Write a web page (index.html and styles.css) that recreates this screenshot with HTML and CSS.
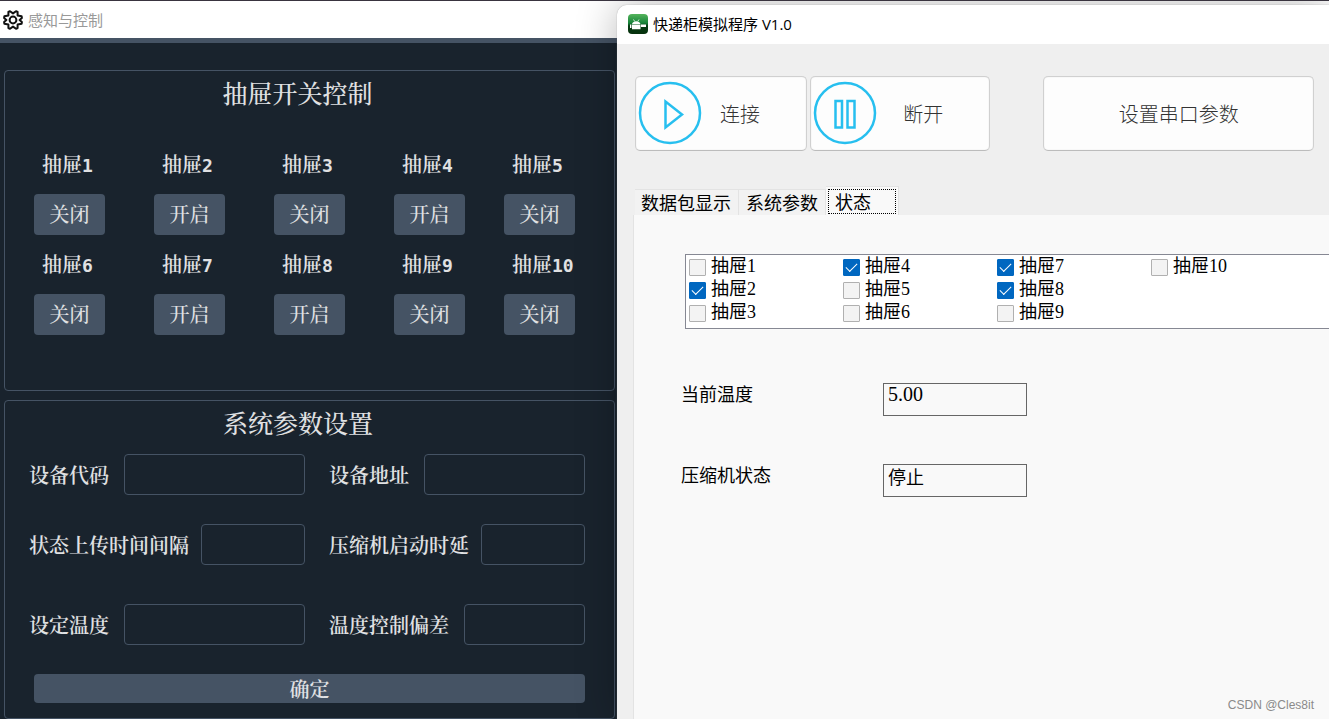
FILE: index.html
```html
<!DOCTYPE html>
<html lang="zh-CN">
<head>
<meta charset="utf-8">
<meta name="viewport" content="width=device-width, initial-scale=1">
<title>感知与控制</title>
<link rel="stylesheet" href="styles.css">
</head>
<body>
<div class="desktop">
  <section class="sense">
    <header class="sense-bar">
      <svg class="gear" viewBox="0 0 20 20" fill="none" stroke="#111" stroke-width="2" stroke-linejoin="round" aria-hidden="true"><path d="M7 1.200 10 3.400 13 1.200 14.600 2 14.600 5.400 18.600 6.200 18.900 8 16.600 10 18.900 12 18.600 13.800 14.600 14.600 14.600 18 13 18.800 10 16.600 7 18.800 5.400 18 5.400 14.600 1.400 13.800 1.100 12 3.400 10 1.100 8 1.400 6.200 5.400 5.400 5.400 2Z"/><circle cx="10" cy="10" r="3.400"/></svg>
      <span>感知与控制</span>
    </header>
    <main class="sense-body">
      <section class="panel">
        <h2 class="panel-title">抽屉开关控制</h2>
        <div class="drawers">
          <div class="drawer"><span class="drawer-name" id="d1">抽屉<span class="num">1</span></span><button class="toggle" aria-describedby="d1">关闭</button></div>
          <div class="drawer"><span class="drawer-name" id="d2">抽屉<span class="num">2</span></span><button class="toggle" aria-describedby="d2">开启</button></div>
          <div class="drawer"><span class="drawer-name" id="d3">抽屉<span class="num">3</span></span><button class="toggle" aria-describedby="d3">关闭</button></div>
          <div class="drawer"><span class="drawer-name" id="d4">抽屉<span class="num">4</span></span><button class="toggle" aria-describedby="d4">开启</button></div>
          <div class="drawer"><span class="drawer-name" id="d5">抽屉<span class="num">5</span></span><button class="toggle" aria-describedby="d5">关闭</button></div>
          <div class="drawer"><span class="drawer-name" id="d6">抽屉<span class="num">6</span></span><button class="toggle" aria-describedby="d6">关闭</button></div>
          <div class="drawer"><span class="drawer-name" id="d7">抽屉<span class="num">7</span></span><button class="toggle" aria-describedby="d7">开启</button></div>
          <div class="drawer"><span class="drawer-name" id="d8">抽屉<span class="num">8</span></span><button class="toggle" aria-describedby="d8">开启</button></div>
          <div class="drawer"><span class="drawer-name" id="d9">抽屉<span class="num">9</span></span><button class="toggle" aria-describedby="d9">关闭</button></div>
          <div class="drawer"><span class="drawer-name" id="d10">抽屉<span class="num">10</span></span><button class="toggle" aria-describedby="d10">关闭</button></div>
        </div>
      </section>
      <form class="panel settings">
        <h2 class="panel-title">系统参数设置</h2>
        <div class="fields">
          <div class="field"><label for="code">设备代码</label><input id="code" type="text"></div>
          <div class="field"><label for="addr">设备地址</label><input id="addr" type="text"></div>
        </div>
        <div class="fields">
          <div class="field snug"><label for="interval">状态上传时间间隔</label><input id="interval" type="text"></div>
          <div class="field snug"><label for="delay">压缩机启动时延</label><input id="delay" type="text"></div>
        </div>
        <div class="fields last">
          <div class="field"><label for="temp">设定温度</label><input id="temp" type="text"></div>
          <div class="field"><label for="offset">温度控制偏差</label><input id="offset" type="text"></div>
        </div>
        <button class="submit" type="button">确定</button>
      </form>
    </main>
  </section>

  <section class="sim">
    <header class="sim-bar">
      <svg class="logo" viewBox="0 0 20 20" aria-hidden="true">
        <defs><linearGradient id="g" x1="0" y1="0" x2="0" y2="1"><stop offset="0" stop-color="#55b45c"/><stop offset=".45" stop-color="#17843a"/><stop offset=".6" stop-color="#043b12"/><stop offset="1" stop-color="#06300c"/></linearGradient></defs>
        <rect width="20" height="20" rx="4" fill="url(#g)"/>
        <path d="M4 10a4.500 4 0 0 1 8.500 0ZM4 10.600h8.500v4.600H4ZM2 10.500h1.400v3.500H2ZM13 10.500h5v2.500h-5Z" fill="#fff"/>
        <path d="m5.500 5.500 1.300 2M11 5.500 9.700 7.500" stroke="#fff" stroke-width=".8"/>
      </svg>
      <span>快递柜模拟程序 V1.0</span>
    </header>
    <div class="toolbar">
      <button class="tool connect"><svg class="ring" viewBox="0 0 64 64" fill="none" stroke="#27bfef" stroke-width="2.500" aria-hidden="true"><circle cx="32" cy="32" r="30"/><path d="M27.500 20.500v26L44 33.500Z"/></svg><span>连接</span></button>
      <button class="tool disconnect"><svg class="ring" viewBox="0 0 64 64" fill="none" stroke="#27bfef" stroke-width="2.500" aria-hidden="true"><circle cx="32" cy="32" r="30"/><path d="M22.500 20h6.500v26.500h-6.500ZM34.500 20h7v26.500h-7Z"/></svg><span>断开</span></button>
      <button class="tool serial">设置串口参数</button>
    </div>
    <div class="tabs" role="tablist">
      <button class="tab" role="tab" aria-selected="false">数据包显示</button>
      <button class="tab" role="tab" aria-selected="false">系统参数</button>
      <button class="tab active" role="tab" aria-selected="true"><span class="focus">状态</span></button>
    </div>
    <div class="page" role="tabpanel">
      <div class="checks">
        <label class="check"><input type="checkbox">抽屉1</label>
        <label class="check"><input type="checkbox" checked>抽屉2</label>
        <label class="check"><input type="checkbox">抽屉3</label>
        <label class="check"><input type="checkbox" checked>抽屉4</label>
        <label class="check"><input type="checkbox">抽屉5</label>
        <label class="check"><input type="checkbox">抽屉6</label>
        <label class="check"><input type="checkbox" checked>抽屉7</label>
        <label class="check"><input type="checkbox" checked>抽屉8</label>
        <label class="check"><input type="checkbox">抽屉9</label>
        <label class="check"><input type="checkbox">抽屉10</label>
      </div>
      <div class="readout"><label for="now">当前温度</label><input class="value figure" id="now" type="text" value="5.00" readonly></div>
      <div class="readout"><label for="comp">压缩机状态</label><input class="value" id="comp" type="text" value="停止" readonly></div>
      <footer class="credit">CSDN @Cles8it</footer>
    </div>
  </section>
</div>
</body>
</html>
```

FILE: styles.css
```css
* { box-sizing: border-box; }

body {
  margin: 0;
  background: #fff;
  font-family: "Noto Sans CJK SC", sans-serif;
}

button, input { font: inherit; color: inherit; }

button { padding: 0; cursor: pointer; }

.desktop {
  display: grid;
  grid-template-columns: 617fr 712fr;
  height: 100vh;
  overflow: hidden;
  border-top: 1px solid #39343f;
}

/* Dark control window */
.sense {
  display: flex;
  flex-direction: column;
  min-width: 0;
  margin-right: -12px;
  padding-right: 12px;
  background: #19232d;
}

.sense-bar {
  display: flex;
  align-items: center;
  gap: 5px;
  height: 37px;
  margin-right: -12px;
  padding-left: 3px;
  background: #fff;
  color: #999;
  font-size: 15px;
}

.gear { width: 20px; height: 20px; }

.sense-body {
  display: flex;
  flex-direction: column;
  gap: 9px;
  flex: 1;
  border-top: 5px solid #455364;
  padding: 27px 2px 0 4px;
  color: #e0e1e3;
  font-family: "Noto Serif CJK SC", "Noto Sans CJK SC", serif;
  font-size: 20px;
  font-weight: 500;
}

.panel {
  border: 1px solid #455364;
  border-radius: 4px;
  padding: 3px 29px 55px;
}

.panel-title {
  margin: 0;
  padding-right: 24px;
  font-size: 25px;
  font-weight: 500;
  line-height: 36px;
  text-align: center;
}

.drawers {
  display: grid;
  grid-template-columns: 120fr 120fr 120fr 110fr 71px;
  row-gap: 14px;
  margin: 39px 10px 0 0;
}

.drawer {
  display: flex;
  flex-direction: column;
  align-items: flex-start;
  gap: 15px;
}

.drawer-name {
  padding-left: 8px;
  font-weight: 600;
  line-height: 30px;
  white-space: nowrap;
}

.num {
  font-family: "DejaVu Sans Mono", monospace;
  font-size: 18px;
  line-height: 1;
}

.toggle, .submit {
  border: 0;
  border-radius: 4px;
  background: #455364;
}

.toggle { width: 71px; height: 41px; padding-bottom: 2px; }

.settings {
  display: flex;
  flex-direction: column;
  flex: 1;
  padding: 3px 29px 0 24px;
}

.settings .panel-title { padding-right: 18px; }

.fields {
  display: grid;
  grid-template-columns: minmax(0, 276fr) minmax(0, 256fr);
  gap: 24px;
  margin-bottom: 29px;
}

.panel-title + .fields { margin-top: 14px; }

.last { margin: 10px 0 29px; }

.field { display: flex; align-items: center; gap: 15px; }

.snug { gap: 12px; }

.field label { flex: none; font-weight: 600; }

.field input {
  flex: 1;
  min-width: 0;
  height: 41px;
  border: 1px solid #455364;
  border-radius: 4px;
  background: transparent;
}

.submit {
  height: 29px;
  margin-left: 5px;
  font-weight: 600;
  line-height: 29px;
}

/* Light simulator window */
.sim {
  z-index: 1;
  display: flex;
  flex-direction: column;
  min-width: 0;
  margin-top: 4px;
  border-radius: 10px 0 0 0;
  background: #efefef;
  box-shadow: 0 0 1px #777, 0 0 40px rgba(0, 0, 0, .28);
  color: #000;
  font-size: 18px;
}

.sim-bar {
  display: flex;
  align-items: center;
  gap: 5px;
  height: 39px;
  padding: 0 0 2px 11px;
  border-radius: 10px 0 0 0;
  background: #fff;
  font-family: "Open Sans", "Noto Sans CJK SC", sans-serif;
  font-size: 15px;
}

.logo { width: 20px; height: 20px; }

.toolbar {
  display: flex;
  gap: 3px;
  padding: 32px 15px 0 18px;
}

.tool {
  display: flex;
  align-items: center;
  height: 75px;
  padding-bottom: 1px;
  border: 1px solid #d0d0d0;
  border-bottom-color: #bcbcbc;
  border-radius: 5px;
  background: #fdfdfd;
  box-shadow: inset 0 0 1px #ccc;
  color: #333;
  font-size: 20px;
  font-weight: 300;
}

.tool span { flex: 1; }

.connect { flex: 171 1 0; padding-left: 2px; text-align: left; gap: 18px; }

.disconnect { flex: 179 1 0; padding-left: 2px; text-align: left; gap: 26px; }

.serial { flex: 273 1 0; justify-content: center; margin-left: 50px; }

.ring { width: 64px; height: 64px; flex: none; }

.tabs {
  display: flex;
  align-items: flex-end;
  height: 64px;
  padding-left: 18px;
}

.tab {
  height: 26px;
  padding: 0 7px;
  border: 1px solid #e3e3e3;
  border-width: 1px 1px 0 0;
  background: #f2f2f2;
  line-height: 25px;
}

.tab:first-child { padding-left: 6px; }

.active {
  height: 29px;
  padding: 2px;
  background: #f9f9f9;
  line-height: 22px;
}

.focus {
  display: block;
  width: 68px;
  height: 25px;
  padding-left: 6px;
  border: 1px dotted #000;
  text-align: left;
}

.page {
  display: flex;
  flex-direction: column;
  flex: 1;
  margin-left: 16px;
  padding-left: 47px;
  border-left: 1px solid #e3e3e3;
  background: #f9f9f9;
}

.checks {
  display: grid;
  grid-template-rows: repeat(3, 23px);
  grid-auto-flow: column;
  grid-auto-columns: 154px;
  height: 75px;
  margin: 39px 0 0 4px;
  padding-left: 3px;
  border: 1px solid #868893;
  border-right: 0;
  background: #fff;
  font-family: "Liberation Serif", "Noto Sans CJK SC", serif;
}

.check {
  display: flex;
  align-items: center;
  gap: 5px;
  line-height: 23px;
}

.check input {
  appearance: none;
  width: 17px;
  height: 17px;
  margin: 2px 0 0;
  border: 1px solid #b0b0b0;
  border-radius: 1px;
  background: #f3f3f3;
}

.check input:checked {
  display: grid;
  place-items: center;
  border-color: #0067c0;
  background: #0067c0;
}

.check input:checked::before {
  content: "";
  width: 10px;
  height: 5px;
  margin-bottom: 3px;
  border: solid #fff;
  border-width: 0 0 1px 1px;
  rotate: -45deg;
}

.readout {
  display: grid;
  grid-template-columns: 202px 144px;
  margin-top: 48px;
}

.checks + .readout { margin-top: 54px; }

.readout label { line-height: 20px; }

.value {
  height: 33px;
  padding: 0 4px 10px;
  border: 1px solid #666;
  background: transparent;
}

.figure { font-family: "Liberation Serif", serif; font-size: 20px; }

.credit {
  margin: auto 15px 6px 0;
  color: #8a8a8a;
  font-family: "Liberation Sans", sans-serif;
  font-size: 12px;
  line-height: 16px;
  text-align: right;
}
```
